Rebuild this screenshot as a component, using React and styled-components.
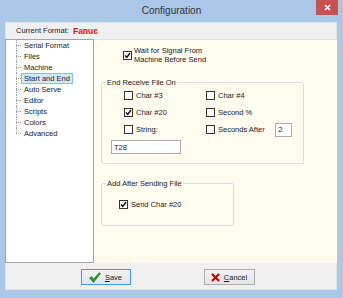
import React from 'react';
import styled, { createGlobalStyle } from 'styled-components';

const GlobalStyle = createGlobalStyle`
  html, body {
    margin: 0;
    padding: 0;
    background: #aac7e8;
  }
  body {
    font-family: "Liberation Sans", Arial, sans-serif;
    font-size: 7.5px;
    color: #1a1a1a;
  }
`;

const Window = styled.div`
  width: 343px;
  height: 298px;
  box-sizing: border-box;
  background: #aac7e8;
  padding: 0 6px 8px 5px;
  display: flex;
  flex-direction: column;
`;

const TitleBar = styled.div`
  height: 22px;
  display: grid;
  grid-template-columns: 1fr auto 1fr;
  align-items: start;
  margin-right: -1px;
`;

const Title = styled.div`
  grid-column: 2;
  font-size: 10px;
  line-height: 22px;
  color: #333;
`;

const CloseButton = styled.div`
  grid-column: 3;
  justify-self: end;
  width: 22px;
  height: 15px;
  background: #c75050;
  display: flex;
  align-items: center;
  justify-content: center;
`;

const Client = styled.div`
  flex: 1;
  background: #f0f0f0;
  display: flex;
  flex-direction: column;
  box-shadow: inset 0 0 0 1px #dde4ec;
`;

const Header = styled.div`
  height: 17px;
  display: flex;
  align-items: center;
  gap: 4px;
  padding-left: 11px;
`;

const FormatName = styled.span`
  color: #ff0000;
  font-weight: bold;
  font-size: 8.5px;
`;

const Body = styled.div`
  display: flex;
  height: 224px;
`;

const Tree = styled.div`
  width: 77px;
  flex-shrink: 0;
  border: 1px solid #a0a6ad;
  background: #fff;
  padding-left: 10px;
`;

const TreeItem = styled.div`
  display: flex;
  height: 11px;
  align-items: center;
`;

const Connector = styled.span`
  width: 5px;
  height: 11px;
  flex-shrink: 0;
  background-image:
    repeating-linear-gradient(to bottom, #9a9a9a 0 1px, transparent 1px 2px),
    repeating-linear-gradient(to right, #9a9a9a 0 1px, transparent 1px 2px);
  background-size: 1px ${p => (p.$last ? '6px' : '11px')}, 5px 1px;
  background-position: 0 0, 0 5px;
  background-repeat: no-repeat;
`;

const TreeLabel = styled.span`
  padding: 0 2px;
  line-height: 9px;
  border: 1px solid ${p => (p.$selected ? '#84bdf0' : 'transparent')};
  background: ${p => (p.$selected ? '#d3e8fb' : 'transparent')};
  white-space: nowrap;
`;

const Pane = styled.div`
  flex: 1;
  background: #fffcef;
  border-top: 1px solid #e3e3e3;
  padding: 6px 0 0 7px;
  display: flex;
  flex-direction: column;
  align-items: flex-start;
`;

const WaitRow = styled.label`
  display: flex;
  align-items: center;
  gap: 2px;
  margin-left: 22px;
  line-height: 9px;
`;

const Group = styled.fieldset`
  margin: ${p => p.$top}px 0 0 0;
  width: ${p => p.$width}px;
  box-sizing: border-box;
  border: 1px solid #d9dde0;
  border-radius: 2px;
  padding: ${p => p.$pad};
  min-inline-size: 0;
`;

const Legend = styled.legend`
  padding: 0 1px;
  margin-left: 4px;
  line-height: 9px;
`;

const OptionGrid = styled.div`
  display: grid;
  grid-template-columns: 82px auto auto;
  grid-auto-rows: 17px;
  align-items: center;
  margin-left: 22px;
`;

const Option = styled.label`
  display: flex;
  align-items: center;
  gap: 3px;
  white-space: nowrap;
  margin-left: ${p => p.$indent || 0}px;
`;

const Box = styled.span`
  width: 7px;
  height: 7px;
  border: 1px solid #333;
  background: #fff;
  display: inline-flex;
  align-items: center;
  justify-content: center;
  flex-shrink: 0;
`;

const TextBox = styled.div`
  width: ${p => p.$width}px;
  height: 14px;
  box-sizing: border-box;
  border: 1px solid #abadb3;
  background: #fff;
  padding-left: 2px;
  display: flex;
  align-items: center;
  margin: ${p => p.$margin || '0'};
`;

const Footer = styled.div`
  flex: 1;
  display: flex;
  align-items: center;
  justify-content: center;
  gap: 73px;
  padding-right: 7px;
  padding-top: 1px;
`;

const Button = styled.div`
  width: ${p => p.$width}px;
  height: 16px;
  box-sizing: border-box;
  border: 1px solid ${p => (p.$default ? '#3c9af0' : '#adadad')};
  background: linear-gradient(#f2f2f2, #e5e5e5);
  display: flex;
  align-items: center;
  justify-content: center;
  gap: 4px;
  u {
    text-decoration: underline;
  }
`;

const Check = ({ checked }) => (
  <Box>
    {checked && (
      <svg width="7" height="7" viewBox="0 0 7 7">
        <path d="M1 3.4 L2.8 5.4 L6 1" fill="none" stroke="#111" strokeWidth="1.5" />
      </svg>
    )}
  </Box>
);

const treeItems = [
  'Serial Format',
  'Files',
  'Machine',
  'Start and End',
  'Auto Serve',
  'Editor',
  'Scripts',
  'Colors',
  'Advanced',
];

export default function App() {
  return (
    <>
      <GlobalStyle />
      <Window>
        <TitleBar>
          <Title>Configuration</Title>
          <CloseButton>
            <svg width="7" height="7" viewBox="0 0 7 7">
              <path d="M1 1 L6 6 M6 1 L1 6" stroke="#fff" strokeWidth="1.6" />
            </svg>
          </CloseButton>
        </TitleBar>
        <Client>
          <Header>
            <span>Current Format:</span>
            <FormatName>Fanuc</FormatName>
          </Header>
          <Body>
            <Tree>
              {treeItems.map((item, i) => (
                <TreeItem key={item}>
                  <Connector $last={i === treeItems.length - 1} />
                  <TreeLabel $selected={item === 'Start and End'}>{item}</TreeLabel>
                </TreeItem>
              ))}
            </Tree>
            <Pane>
              <WaitRow>
                <Check checked />
                <span>
                  Wait for Signal From
                  <br />
                  Machine Before Send
                </span>
              </WaitRow>
              <Group $top={14} $width={203} $pad="0 0 9px 0">
                <Legend>End Receive File On</Legend>
                <OptionGrid>
                  <Option><Check />Char #3</Option>
                  <Option><Check />Char #4</Option>
                  <span />
                  <Option><Check checked />Char #20</Option>
                  <Option><Check />Second %</Option>
                  <span />
                  <Option><Check />String:</Option>
                  <Option><Check />Seconds After</Option>
                  <TextBox $width={17}>2</TextBox>
                </OptionGrid>
                <TextBox $width={70} $margin="2px 0 0 9px">T28</TextBox>
              </Group>
              <Group $top={15} $width={133} $pad="12px 0 16px 0">
                <Legend>Add After Sending File</Legend>
                <Option $indent={17}><Check checked />Send Char #20</Option>
              </Group>
            </Pane>
          </Body>
          <Footer>
            <Button $width={50} $default>
              <svg width="12" height="11" viewBox="0 0 12 11">
                <path d="M0.5 6 L2.5 4.5 L4.5 7 L10.5 0.5 L11.5 1.5 L4.5 10.5 Z" fill="#2f9a2a" stroke="#1c6b18" strokeWidth="0.6" />
              </svg>
              <span><u>S</u>ave</span>
            </Button>
            <Button $width={51}>
              <svg width="9" height="9" viewBox="0 0 9 9">
                <path d="M1 1 L8 8 M8 1 L1 8" stroke="#c40000" strokeWidth="2.2" />
              </svg>
              <span><u>C</u>ancel</span>
            </Button>
          </Footer>
        </Client>
      </Window>
    </>
  );
}
